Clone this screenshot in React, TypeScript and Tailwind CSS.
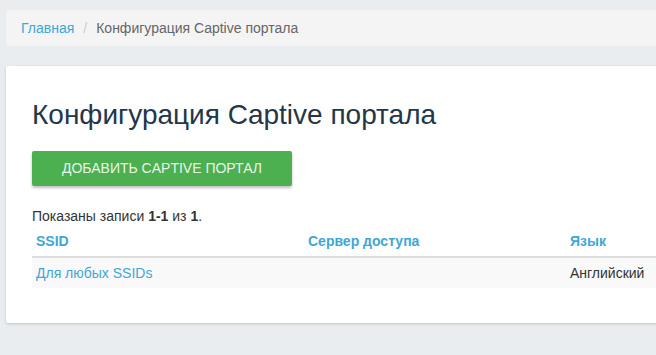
export default function App() {
  return (
    <div className="h-[355px] w-full overflow-hidden bg-[#e9edf0] font-['Liberation_Sans',Arial,sans-serif]">
      <div className="w-[720px] pl-[6px] pt-[10px]">
        {/* Breadcrumb */}
        <div className="flex h-[36px] items-center rounded-[4px] bg-[#f4f4f4] pl-[15px] text-[14px]">
          <span className="text-[#3ea7d6]">Главная</span>
          <span className="px-[9px] text-[#cccccc]">/</span>
          <span className="text-[#666666]">Конфигурация Captive портала</span>
        </div>

        {/* Card */}
        <div className="mt-[20px] h-[257px] rounded-[2px] bg-white px-[26px] pt-[30px] shadow-[0_1px_3px_rgba(0,0,0,0.18)]">
          <h1 className="text-[28px] leading-[38px] text-[#23364a]">Конфигурация Captive портала</h1>
          <button className="mt-[17px] flex h-[35px] w-[260px] items-center justify-center rounded-[2px] bg-[#4caf50] text-[14px] uppercase text-[#e8f5e9] shadow-[0_2px_3px_rgba(0,0,0,0.25)]">
            Добавить Captive портал
          </button>
          <div className="mt-[20px] text-[14px] leading-[20px] text-[#333333]">
            Показаны записи <b>1-1</b> из <b>1</b>.
          </div>
          <table className="w-[660px] border-collapse text-[14px]">
            <thead>
              <tr className="border-b-2 border-[#dddddd]">
                <th className="h-[31px] w-[272px] px-[4px] pt-[1px] text-left font-bold text-[#3ea7d6]">SSID</th>
                <th className="w-[262px] px-[4px] pt-[1px] text-left font-bold text-[#3ea7d6]">Сервер доступа</th>
                <th className="px-[4px] pt-[1px] text-left font-bold text-[#3ea7d6]">Язык</th>
              </tr>
            </thead>
            <tbody>
              <tr className="bg-[#f9f9f9]">
                <td className="h-[31px] px-[4px] pt-[1px] text-[#3ea7d6]">Для любых SSIDs</td>
                <td className="px-[4px]"></td>
                <td className="px-[4px] pt-[1px] text-[#333333]">Английский</td>
              </tr>
            </tbody>
          </table>
        </div>
      </div>
    </div>
  );
}
